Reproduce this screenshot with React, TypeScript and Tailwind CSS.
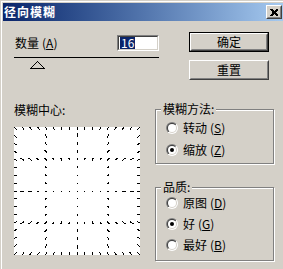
import type { ReactNode } from 'react';

const FONT = "font-['Noto_Sans_CJK_SC','Noto_Sans',sans-serif]";

const Key = ({ children }: { children: ReactNode }) => (
  <span className="ml-[3px]">
    (<span className="underline underline-offset-[1px]">{children}</span>)
  </span>
);

const Radio = ({ checked }: { checked?: boolean }) => (
  <svg width="12" height="12" viewBox="0 0 12 12" className="shrink-0">
    <defs>
      <linearGradient id="radio-out" x1="0" y1="0" x2="1" y2="1">
        <stop offset="0.5" stopColor="#808080" />
        <stop offset="0.5" stopColor="#ffffff" />
      </linearGradient>
      <linearGradient id="radio-in" x1="0" y1="0" x2="1" y2="1">
        <stop offset="0.5" stopColor="#404040" />
        <stop offset="0.5" stopColor="#d4d0c8" />
      </linearGradient>
    </defs>
    <circle cx="6" cy="6" r="6" fill="url(#radio-out)" />
    <circle cx="6" cy="6" r="5" fill="url(#radio-in)" />
    <circle cx="6" cy="6" r="4" fill="#ffffff" />
    {checked && <circle cx="6" cy="6" r="2" fill="#000000" />}
  </svg>
);

const Option = ({ label, k, checked }: { label: string; k: string; checked?: boolean }) => (
  <div className="ml-[5px] flex h-[14px] items-center gap-[5px]">
    <Radio checked={checked} />
    <span>
      {label}
      <Key>{k}</Key>
    </span>
  </div>
);

const Button = ({ label, isDefault }: { label: string; isDefault?: boolean }) => (
  <div className={`h-[20px] w-[80px] ${isDefault ? 'border border-black' : ''}`}>
    <div className="h-full border border-t-white border-l-white border-r-[#404040] border-b-[#404040]">
      <div className="flex h-full items-center justify-center border border-t-[#d4d0c8] border-l-[#d4d0c8] border-r-[#808080] border-b-[#808080]">
        {label}
      </div>
    </div>
  </div>
);

// preview of the zoom blur: short strokes on a 4x4 grid, all pointing at the centre
const BlurCenter = () => {
  const w = 126;
  const h = 128;
  const cx = w / 2;
  const cy = h / 2;
  const segs: ReactNode[] = [];
  for (let i = 0; i <= 16; i++) {
    for (let j = 0; j <= 16; j++) {
      if (i % 4 !== 0 && j % 4 !== 0) continue;
      const x = 0.5 + (i * (w - 1)) / 16;
      const y = 0.5 + (j * (h - 1)) / 16;
      const dx = x - cx;
      const dy = y - cy;
      const r = Math.hypot(dx, dy);
      const len = Math.max(1, r * 0.07);
      const ux = r ? dx / r : 1;
      const uy = r ? dy / r : 0;
      segs.push(
        <line
          key={`${i}-${j}`}
          x1={x - (ux * len) / 2}
          y1={y - (uy * len) / 2}
          x2={x + (ux * len) / 2}
          y2={y + (uy * len) / 2}
        />,
      );
    }
  }
  return (
    <svg width={w} height={h} className="mt-[10px] block bg-white" shapeRendering="crispEdges">
      <g stroke="#000000" strokeWidth="1">{segs}</g>
    </svg>
  );
};

const GroupBox = ({ title, className, children }: { title: string; className: string; children: ReactNode }) => (
  <fieldset
    className={`border border-[#808080] pl-[5px] shadow-[inset_1px_1px_0_#fff,1px_1px_0_#fff] ${className}`}
  >
    <legend className="bg-[#d4d0c8] px-[2px]">{title}</legend>
    {children}
  </fieldset>
);

export default function App() {
  return (
    <div
      className={`h-[269px] w-[283px] overflow-hidden border-t border-l border-[#d4d0c8] bg-[#d4d0c8] pt-[2px] pl-[2px] text-[12px] leading-[14px] text-black shadow-[inset_1px_1px_0_#fff] ${FONT}`}
    >
      <div className="flex h-[18px] items-center justify-between bg-linear-to-r from-[#0a246a] to-[#a6caf0]">
        <span className="pl-px text-[12px] font-bold tracking-[1px] text-white">径向模糊</span>
        <div className="mr-px h-[14px] w-[16px] border border-t-white border-l-white border-r-[#404040] border-b-[#404040]">
          <div className="flex h-full items-center justify-center border border-t-[#d4d0c8] border-l-[#d4d0c8] border-r-[#808080] border-b-[#808080] bg-[#d4d0c8]">
            <svg width="8" height="7" viewBox="0 0 8 7" shapeRendering="crispEdges">
              <path d="M0 0h2l2 2 2-2h2v1l-2 2v1l2 2v1h-2l-2-2-2 2h-2v-1l2-2v-1l-2-2z" fill="#000000" />
            </svg>
          </div>
        </div>
      </div>

      <div className="pt-[11px] pl-[11px]">
        <div className="flex items-start">
          <div className="w-[145px]">
            <div className="mt-[3px] flex h-[16px] items-center">
              <span className="pl-px">
                数量
                <Key>A</Key>
              </span>
              <div className="ml-auto h-[16px] w-[42px] border border-t-[#808080] border-l-[#808080] border-r-white border-b-white">
                <div className="flex h-full items-center border border-t-[#404040] border-l-[#404040] border-r-[#d4d0c8] border-b-[#d4d0c8] bg-white pl-px">
                  <span className="bg-[#0a246a] px-px leading-[12px] text-white">16</span>
                </div>
              </div>
            </div>
            <div className="mt-[6px] h-px bg-black" />
            <svg width="15" height="8" viewBox="0 0 15 8" className="mt-[3px] ml-[16px] block" shapeRendering="crispEdges">
              <polygon points="7.5,0.5 14.5,7.5 0.5,7.5" fill="none" stroke="#000000" />
            </svg>
          </div>
          <div className="ml-[30px] flex flex-col gap-[8px]">
            <Button label="确定" isDefault />
            <Button label="重置" />
          </div>
        </div>

        <div className="mt-[22px] flex items-start">
          <div>
            <div className="mt-px h-[14px]">模糊中心:</div>
            <BlurCenter />
          </div>
          <div className="ml-[15px] flex w-[119px] flex-col">
            <GroupBox title="模糊方法:" className="flex flex-col gap-[8px] pt-[5px] pb-[6px]">
              <Option label="转动" k="S" />
              <Option label="缩放" k="Z" checked />
            </GroupBox>
            <GroupBox title="品质:" className="mt-[16px] flex flex-col gap-[7px] pt-[2px] pb-[8px]">
              <Option label="原图" k="D" />
              <Option label="好" k="G" checked />
              <Option label="最好" k="B" />
            </GroupBox>
          </div>
        </div>
      </div>
    </div>
  );
}
